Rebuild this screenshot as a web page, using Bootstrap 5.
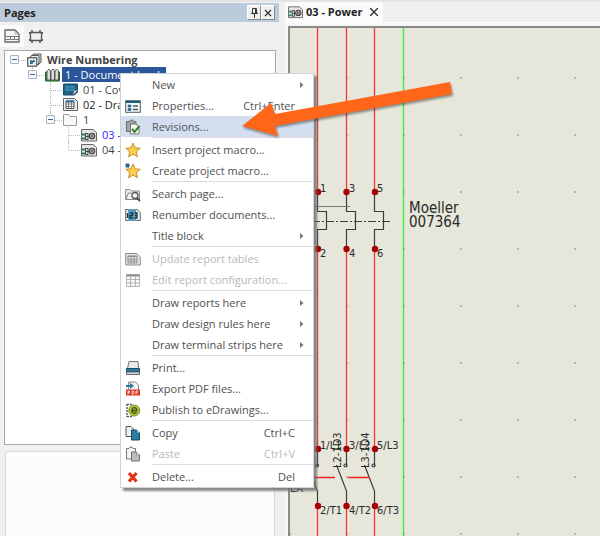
<!DOCTYPE html>
<html lang="en">
<head>
<meta charset="utf-8">
<meta name="viewport" content="width=device-width, initial-scale=1">
<title>03 - Power</title>
<link href="https://cdn.jsdelivr.net/npm/bootstrap@5.3.0/dist/css/bootstrap.min.css" rel="stylesheet">
<style>
:root{--ui:"Open Sans","Noto Sans",sans-serif;--tree:"DejaVu Sans Condensed","DejaVu Sans",sans-serif}
body{background:#f0f0f0;color:#333;font:11px/15px var(--ui)}
button{font:inherit}
.app{height:100vh;border-top:2px solid #e4e4e4}
.side{width:279px}
.side-head{height:19px;background:#bccbda;font:700 11px/19px var(--ui);color:#222;margin-top:1px}
.cap-btn{width:14px;height:15px;padding:0;border:1px solid #888;border-top-color:#fff;border-left-color:#fff;background:#f0f0f0}
.tools{margin:3px 0}
.tool{width:24px;height:22px;padding:0;border:0;background:none}
.tool.on{background:#fafafa}
.tree-box{height:395px;margin:0 3px 0 4px;border:1px solid #a3a9b0;background:#fff;font:11px/15px var(--ui);color:#444;padding-top:1px}
.tree-box ul{list-style:none;margin:0;padding:0}
.tree-box ul ul{padding-left:18px}
.tree-box li{position:relative}
.tree-box ul ul>li::before{content:"";position:absolute;left:9px;top:0;height:100%;border-left:1px dotted #bbb}
.tree-box ul ul>li:last-child::before{height:8px}
.node{display:flex;align-items:center;height:15px;white-space:nowrap}
.gut{width:19px;margin-right:3px;display:flex;justify-content:center;position:relative}
.gut::after{content:"";position:absolute;left:10px;right:-2px;top:50%;border-top:1px dotted #bbb}
.exp{width:9px;height:9px;padding:0;border:1px solid #a9b3c0;border-radius:1px;background:#f7f9fc;display:flex;align-items:center;justify-content:center;z-index:1}
.exp i{width:5px;height:1px;background:#3f5fa8}
.node svg{flex:none;margin-right:2px}
.node a{color:inherit;text-decoration:none;padding:0 3px}
.node a.sel{background:#2b569b;color:#fff}
.node a.open{color:#2a1fff}
.lower{margin:6px 4px 0 5px;border:1px solid #d9d9d9;border-bottom:0;border-radius:3px 3px 0 0;background:#fcfcfc}
.tabs{height:21px;background:#efefef;border-bottom:1px solid #fff}
.tab-on{background:#fbfbfb;width:98px;font:700 11px/20px var(--ui);color:#222;padding-left:3px}
.tab-on a{color:inherit;text-decoration:none;margin-left:3px}
.tab-x{border:0;background:none;padding:0;margin-left:8px;display:flex}
.doc{min-width:0;margin-left:6px;background:#f6f6f6}
.sheet{border:solid #8a8a86;border-width:2px 0 0 2px;background:#e6e6da;margin:3px 0 0 3px;min-height:0;overflow:hidden}
.sheet svg{display:block;width:100%;height:100%}
.sheet text{font-family:var(--tree);fill:#2a2a2a}
.ctx{--bs-dropdown-min-width:193px;position:absolute;left:120px;top:73px;width:194px;padding:0;border:1px solid #d2d2d2;border-radius:0;background:#fff;font:11px/15px var(--ui);box-shadow:3px 3px 2px #6b6b6bcc}
.ctx .dropdown-item{display:flex;align-items:center;height:21px;padding:0 18px 0 4px;color:#505050;font-size:11px;line-height:21px}
.ctx .dropdown-item.hot{background:#d3dff0}
.ctx .dropdown-item:disabled{color:#b8b8b8}
.ico{width:16px;height:16px;flex:none;margin-right:11px;display:flex}
.ctx .sub{padding-right:8px}
.ctx hr{margin:0 0 0 31px;height:2px;border:0;border-top:1px solid #dcdcdc;opacity:1}
.pointer{position:absolute;left:236px;top:76px;pointer-events:none;z-index:1100}
</style>
<script src="https://cdn.jsdelivr.net/npm/bootstrap@5.3.0/dist/js/bootstrap.bundle.min.js"></script>
</head>
<body class="overflow-hidden">
<svg width="0" height="0" class="position-absolute" aria-hidden="true">
 <defs>
  <symbol id="sch" viewBox="0 0 16 14"><path d="M.5 1.500h11.500l3.500 3v8.500H.5z" fill="#e4e7e5" stroke="#666"/><path d="M1 6.500h3M1 10.500h3" stroke="#21884d" stroke-width="1.800"/><path d="M4.500 5.500h2.500v6H4.500zM4.500 8.500h5" fill="none" stroke="#444"/><circle cx="11" cy="8" r="2.800" fill="#d5d5d5" stroke="#444" stroke-width="1.100"/><path d="M10 5.500v5.500M12 5.500v5.500M10 8h2" stroke="#444" stroke-width=".8"/></symbol>
  <symbol id="star" viewBox="0 0 16 16"><path d="M8 1l2.100 4.800 5.100.5-3.900 3.400 1.200 5.100L8 12.100l-4.500 2.700 1.200-5.100L.8 6.300l5.100-.5z" fill="#fbcf4a" stroke="#c98d2e"/></symbol>
  <symbol id="arr" viewBox="0 0 5 8"><path d="M0 1l3.500 3L0 7z" fill="#777"/></symbol>
 </defs>
</svg>
<div class="app d-flex">
 <aside class="side d-flex flex-column flex-shrink-0">
  <header class="side-head d-flex align-items-center px-1">
   <span class="flex-grow-1">Pages</span>
   <button class="cap-btn d-flex align-items-center justify-content-center" aria-label="Pin"><svg width="9" height="11" viewBox="0 0 9 11" fill="none" stroke="#333"><path d="M2.500 1.500h4v5h-4zM5.500 1v5M1 6.500h7M4.500 7v4"/></svg></button>
   <button class="cap-btn d-flex align-items-center justify-content-center" aria-label="Close"><svg width="8" height="8" viewBox="0 0 8 8" stroke="#333" stroke-width="1.300"><path d="M1 1l6 6M7 1L1 7"/></svg></button>
  </header>
  <div class="tools d-flex">
   <button class="tool on d-flex align-items-center justify-content-center" aria-label="Pages"><svg width="16" height="14" viewBox="0 0 16 14"><path d="M1 1h10l4 4v8H1z" fill="#f6f6f6" stroke="#666" stroke-width="1.300"/><path d="M1 7.500h14M6.500 8v2.500h4V8M1 10.500h5M10.500 10.500H15" fill="none" stroke="#777"/><path d="M11 1v4h4" fill="none" stroke="#999" stroke-width=".7"/></svg></button>
   <button class="tool d-flex align-items-center justify-content-center" aria-label="Components"><svg width="16" height="15" viewBox="0 0 16 15" fill="none"><path d="M2.500 3.500h11v8h-11z" stroke="#555" stroke-width="1.300"/><path d="M4 1v2.500M12 1v2.500M4 11.500V14M12 11.500V14" stroke="#555" stroke-width="1.500"/><path d="M1.500 3v2M14.500 3v2M1.500 10v2M14.500 10v2" stroke="#555"/></svg></button>
  </div>
  <nav class="tree-box flex-shrink-0" aria-label="Project pages">
   <ul><li>
    <div class="node"><span class="gut"><button class="exp" aria-label="Collapse"><i></i></button></span><svg width="15" height="14" viewBox="0 0 15 14"><path d="M4 3l3-2h7v8l-3 3" fill="#ddd" stroke="#555"/><path d="M2.500 4.500L5 2.500h7v7.500l-2 2" fill="#eee" stroke="#555"/><rect x=".7" y="4.700" width="9" height="8.500" fill="#e8f0f5" stroke="#555" stroke-width="1.200"/><path d="M3 10.500h2l2-4M4 7v4M3 8.500h5" stroke="#235f80" fill="none" stroke-width="1.200"/></svg><a href="#" class="fw-bold">Wire Numbering</a></div>
    <ul><li>
     <div class="node"><span class="gut"><button class="exp" aria-label="Collapse"><i></i></button></span><svg width="15" height="14" viewBox="0 0 15 14"><path d="M.5 4v9h14V4z" fill="#3b9a3a" stroke="#1d6a24"/><path d="M2 3l2-2 1.500 2v9H2zM6 3l2-2 1.500 2v9H6zM10 3l1.500-2L13.500 3v9H10z" fill="#dcdcdc" stroke="#444" stroke-width=".8"/></svg><a href="#" class="sel">1 - Document book</a></div>
     <ul>
      <li><div class="node"><span class="gut"></span><svg width="15" height="13" viewBox="0 0 15 13"><path d="M.5 1h14v8l-3 3H.5z" fill="#1e6383" stroke="#174d66"/><path d="M3 3.500h8v4H3z" fill="#2b7ca0" stroke="#4d9bbb" stroke-width=".8"/><path d="M10 12l1-4 4-1z" fill="#eef4f7" stroke="#777" stroke-width=".7"/></svg><a href="#">01 - Cover</a></div></li>
      <li><div class="node text-dark"><span class="gut"></span><svg width="15" height="13" viewBox="0 0 15 13"><path d="M.5.5h11l3 3v9H.5z" fill="#eee" stroke="#666"/><path d="M3 3h8v7.500H3z" fill="#fff" stroke="#555"/><path d="M3 3.500h8" stroke="#2d6d98" stroke-width="2"/><path d="M3 6h8M3 8.500h8M5.500 4v6.500M8.500 4v6.500" stroke="#666" stroke-width=".8"/></svg><a href="#">02 - Drawing list</a></div></li>
      <li><div class="node"><span class="gut"><button class="exp" aria-label="Collapse"><i></i></button></span><svg width="15" height="13" viewBox="0 0 15 13"><path d="M.5 12.500v-11h5l1.500 2h6.500v9z" fill="#f7f7f7" stroke="#999"/></svg><a href="#">1</a></div>
       <ul>
        <li><div class="node"><span class="gut"></span><svg width="16" height="14"><use href="#sch"/></svg><a href="#" class="open">03 - Power</a></div></li>
        <li><div class="node"><span class="gut"></span><svg width="16" height="14"><use href="#sch"/></svg><a href="#">04 - Control</a></div></li>
       </ul></li>
     </ul></li></ul>
   </li></ul>
  </nav>
  <section class="lower flex-grow-1" aria-label="Preview"></section>
 </aside>
 <main class="doc d-flex flex-column flex-grow-1">
  <div class="tabs d-flex">
   <div class="tab-on d-flex align-items-center"><svg width="15" height="14"><use href="#sch"/></svg><a href="#">03 - Power</a><button class="tab-x" aria-label="Close tab"><svg width="8" height="8" viewBox="0 0 8 8" stroke="#333" stroke-width="1.400"><path d="M0 0l8 8M8 0L0 8"/></svg></button></div>
  </div>
  <div class="sheet flex-grow-1">
   <svg role="img" aria-label="Power schematic">
    <defs><pattern id="dots" x="56" y="49" width="57" height="57" patternUnits="userSpaceOnUse"><path d="M0 1h2" stroke="#84847c"/></pattern></defs>
    <rect width="100%" height="100%" fill="url(#dots)"/>
    <g transform="translate(-290 -28)">
     <path d="M317.500 28v164M346.500 28v164M374.500 28v164M317.500 249v200M346.500 249v200M374.500 249v200M317.500 506v100M346.500 506v100M374.500 506v100" stroke="#f83838" stroke-width="1.300"/>
     <path d="M403.500 28v600" stroke="#2cf52c" stroke-width="1.300"/>
     <g fill="none" stroke="#3c3c3c" stroke-width="1.200"><path d="M317.500 192v19.500h9v18h-9V249M346.500 192v19.500h9v18h-9V249M374.500 192v19.500h9v18h-9V249"/><path d="M312 221.500h78" stroke-dasharray="8 2 2 2"/><path d="M312 206.500h38" stroke="#777"/>
     <path d="M317.500 449v18M346.500 449v18M374.500 449v18M317.500 506v-15l-10-26M346.500 506v-15l-10-26M374.500 506v-15l-10-26"/><circle cx="317" cy="465.500" r="1.500"/><circle cx="345.500" cy="465.500" r="1.500"/><circle cx="373.500" cy="465.500" r="1.500"/></g>
     <path d="M312 477.500h23M348 477.500h22" stroke="#f02020" stroke-width="1.300"/>
     <g fill="#a80000"><circle cx="318" cy="192" r="3.200"/><circle cx="346.500" cy="192" r="3.200"/><circle cx="375" cy="192" r="3.200"/><circle cx="318" cy="249" r="3.200"/><circle cx="346.500" cy="249" r="3.200"/><circle cx="375" cy="249" r="3.200"/><circle cx="318" cy="449" r="3.200"/><circle cx="346.500" cy="449" r="3.200"/><circle cx="375" cy="449" r="3.200"/><circle cx="318" cy="506" r="3.200"/><circle cx="346.500" cy="506" r="3.200"/><circle cx="375" cy="506" r="3.200"/></g>
     <g font-size="11"><text x="320" y="192">1</text><text x="349" y="192">3</text><text x="377" y="192">5</text><text x="320" y="257">2</text><text x="349" y="257">4</text><text x="377" y="257">6</text>
     <text x="320" y="449">1/L1</text><text x="349" y="449">3/L2</text><text x="377" y="449">5/L3</text><text x="320" y="514">2/T1</text><text x="349" y="514">4/T2</text><text x="377" y="514">6/T3</text>
     <text transform="translate(341 468) rotate(-90)">L2-1D3</text><text transform="translate(369 468) rotate(-90)">L3-1D4</text></g>
     <g font-size="15"><text x="409" y="213">Moeller</text><text x="409" y="227">007364</text></g>
     <text x="290" y="492" font-size="11">EA</text>
    </g>
   </svg>
  </div>
 </main>
</div>

<div class="dropdown-menu show ctx" role="menu">
 <button class="dropdown-item sub"><span class="ico"></span><span class="flex-grow-1">New</span><svg width="5" height="8"><use href="#arr"/></svg></button>
 <button class="dropdown-item"><span class="ico"><svg viewBox="0 0 16 16"><rect x=".7" y="2.700" width="14.600" height="11.600" fill="#f6fafc" stroke="#4a5a66"/><path d="M1 3h14v2H1z" fill="#1f5d7e"/><path d="M3 7h3v2H3zM3 10.500h3v2H3z" fill="#2b7699" stroke="#1f5d7e" stroke-width=".6"/><path d="M8 8h5M8 11.500h5" stroke="#555" stroke-width="1.300"/></svg></span><span class="flex-grow-1">Properties...</span><span>Ctrl+Enter</span></button>
 <button class="dropdown-item hot"><span class="ico"><svg viewBox="0 0 16 16"><path d="M1.500 2.500h3l1-1.500h2l1 1.500h2.500v10h-9.500z" fill="#a4a4a4" stroke="#6c6c6c"/><path d="M5.500 5h5.500l3 3v7H5.500z" fill="#f4f4f4" stroke="#777"/><path d="M7 10l2.500 3L14.500 7" fill="none" stroke="#35832b" stroke-width="2"/></svg></span><span class="flex-grow-1">Revisions...</span></button>
 <hr>
 <button class="dropdown-item"><span class="ico"><svg viewBox="0 0 16 16"><use href="#star" width="16" height="16"/></svg></span><span class="flex-grow-1">Insert project macro...</span></button>
 <button class="dropdown-item"><span class="ico"><svg viewBox="0 0 16 16"><use href="#star" width="16" height="16"/><path d="M1 1h3v3H1z" fill="#2b7699" stroke="#1f5d7e"/></svg></span><span class="flex-grow-1">Create project macro...</span></button>
 <hr>
 <button class="dropdown-item"><span class="ico"><svg viewBox="0 0 16 16"><path d="M.7 13.500V3.500h4l1.500 1.500h8.300v8.500zM.7 13.500L3.500 7h3" fill="#eee" stroke="#888"/><circle cx="10" cy="9.500" r="3" fill="#f4f4f4" stroke="#555" stroke-width="1.300"/><path d="M12 12l3 3" stroke="#444" stroke-width="1.800"/></svg></span><span class="flex-grow-1">Search page...</span></button>
 <button class="dropdown-item"><span class="ico"><svg viewBox="0 0 16 16"><path d="M.7 2.500h11.300l3.300 3v8H.7z" fill="#eee" stroke="#666"/><path d="M3 2h8v12H3z" fill="#5f9bbb"/><path d="M2.500 6v5M5 6h2.500v2.500H5V11h3M9.500 6h2.500v5H9.500M10 8.500h2" fill="none" stroke="#12384e" stroke-width="1.400"/></svg></span><span class="flex-grow-1">Renumber documents...</span></button>
 <button class="dropdown-item sub"><span class="ico"></span><span class="flex-grow-1">Title block</span><svg width="5" height="8"><use href="#arr"/></svg></button>
 <hr>
 <button class="dropdown-item" disabled><span class="ico"><svg viewBox="0 0 16 16" fill="none" stroke="#8c8c8c"><path d="M.7 2.500h11l3.600 3.500v8H.7z" fill="#e4e4e4"/><path d="M3 5h9v7H3z" fill="#f4f4f4"/><path d="M3 5.500h9M3 8h9M3 10h9M6 5v7M9 5v7"/></svg></span><span class="flex-grow-1">Update report tables</span></button>
 <button class="dropdown-item" disabled><span class="ico"><svg viewBox="0 0 16 16" fill="none" stroke="#b4b4b4"><path d="M1.500 2.500h13v12h-13z" fill="#f8f8f8"/><path d="M1.500 3.500h13" stroke="#8f8f8f" stroke-width="2"/><path d="M2 7.500h12M2 11h12M5.500 4v10M10.500 4v10"/></svg></span><span class="flex-grow-1">Edit report configuration...</span></button>
 <hr>
 <button class="dropdown-item sub"><span class="ico"></span><span class="flex-grow-1">Draw reports here</span><svg width="5" height="8"><use href="#arr"/></svg></button>
 <button class="dropdown-item sub"><span class="ico"></span><span class="flex-grow-1">Draw design rules here</span><svg width="5" height="8"><use href="#arr"/></svg></button>
 <button class="dropdown-item sub"><span class="ico"></span><span class="flex-grow-1">Draw terminal strips here</span><svg width="5" height="8"><use href="#arr"/></svg></button>
 <hr>
 <button class="dropdown-item"><span class="ico"><svg viewBox="0 0 16 16"><path d="M4 1.500h9l.5 7h-11z" fill="#e6eaec" stroke="#777"/><path d="M1.500 8.500h13v3h-13z" fill="#2b7699" stroke="#174d66"/><path d="M1.500 12h13v2.500h-13z" fill="#cfdde4" stroke="#666"/></svg></span><span class="flex-grow-1">Print...</span></button>
 <button class="dropdown-item"><span class="ico"><svg viewBox="0 0 16 16"><path d="M3.500 1h7l3 3v8h-10z" fill="#f4f4f4" stroke="#888"/><path d="M1 4h4V1.500l4 3.500-4 3V6H1z" fill="#2b7ca0"/><path d="M1 8.500h14v6H1z" fill="#d8331c"/><path d="M3 13.500v-3.500h1.500v1.800H3M7 10v3h1.200l.8-1.500-.8-1.500zM11 13.500V10h2.500M11 11.800h2" fill="none" stroke="#fff" stroke-width=".8"/></svg></span><span class="flex-grow-1">Export PDF files...</span></button>
 <button class="dropdown-item"><span class="ico"><svg viewBox="0 0 16 16"><path d="M2 2v13M2 2.500h5M2 14.500h5" stroke="#555" stroke-width="1.400" stroke-dasharray="2 1" fill="none"/><circle cx="9.300" cy="8.500" r="5.500" fill="#b0c53a" stroke="#7d8d2a"/><path d="M6.800 8.500h5c0-3.800-5-3.800-5 0 0 3.300 3.800 3.300 4.800 1.700" fill="none" stroke="#3d4a1a" stroke-width="1.300"/></svg></span><span class="flex-grow-1">Publish to eDrawings...</span></button>
 <hr>
 <button class="dropdown-item"><span class="ico"><svg viewBox="0 0 16 16"><path d="M1 1.500h5l2.500 2.500v7.500H1z" fill="#eef1f3" stroke="#555"/><path d="M6.500 5h5l3 3v7h-8z" fill="#2b7ca0" stroke="#174d66"/><path d="M11.500 5v3h3" fill="#cfe2ec" stroke="#174d66" stroke-width=".7"/></svg></span><span class="flex-grow-1">Copy</span><span>Ctrl+C</span></button>
 <button class="dropdown-item" disabled><span class="ico"><svg viewBox="0 0 16 16"><path d="M1.500 2.500h2.500l1-1.500h2l1 1.500h2.500v10.500h-9z" fill="#f3f3f3" stroke="#777"/><path d="M6.500 6h5l3 3v6h-8z" fill="#bcbcbc" stroke="#6f6f6f"/><path d="M11.500 6v3h3" fill="#eee" stroke="#777" stroke-width=".7"/></svg></span><span class="flex-grow-1">Paste</span><span>Ctrl+V</span></button>
 <hr>
 <button class="dropdown-item"><span class="ico"><svg viewBox="0 0 16 16"><path d="M4 4l7.500 8.500M11.500 4L4 12.500" stroke="#e2330f" stroke-width="3.200"/></svg></span><span class="flex-grow-1">Delete...</span><span>Del</span></button>
</div>
<svg class="pointer" width="224" height="70" viewBox="236 76 224 70" aria-hidden="true"><path d="M242 126l29-23 4 11 175-32 2 12-177 32 3 10z" fill="#ff661a" filter="drop-shadow(1px 2px 1px #0006)"/></svg>
</body>
</html>
